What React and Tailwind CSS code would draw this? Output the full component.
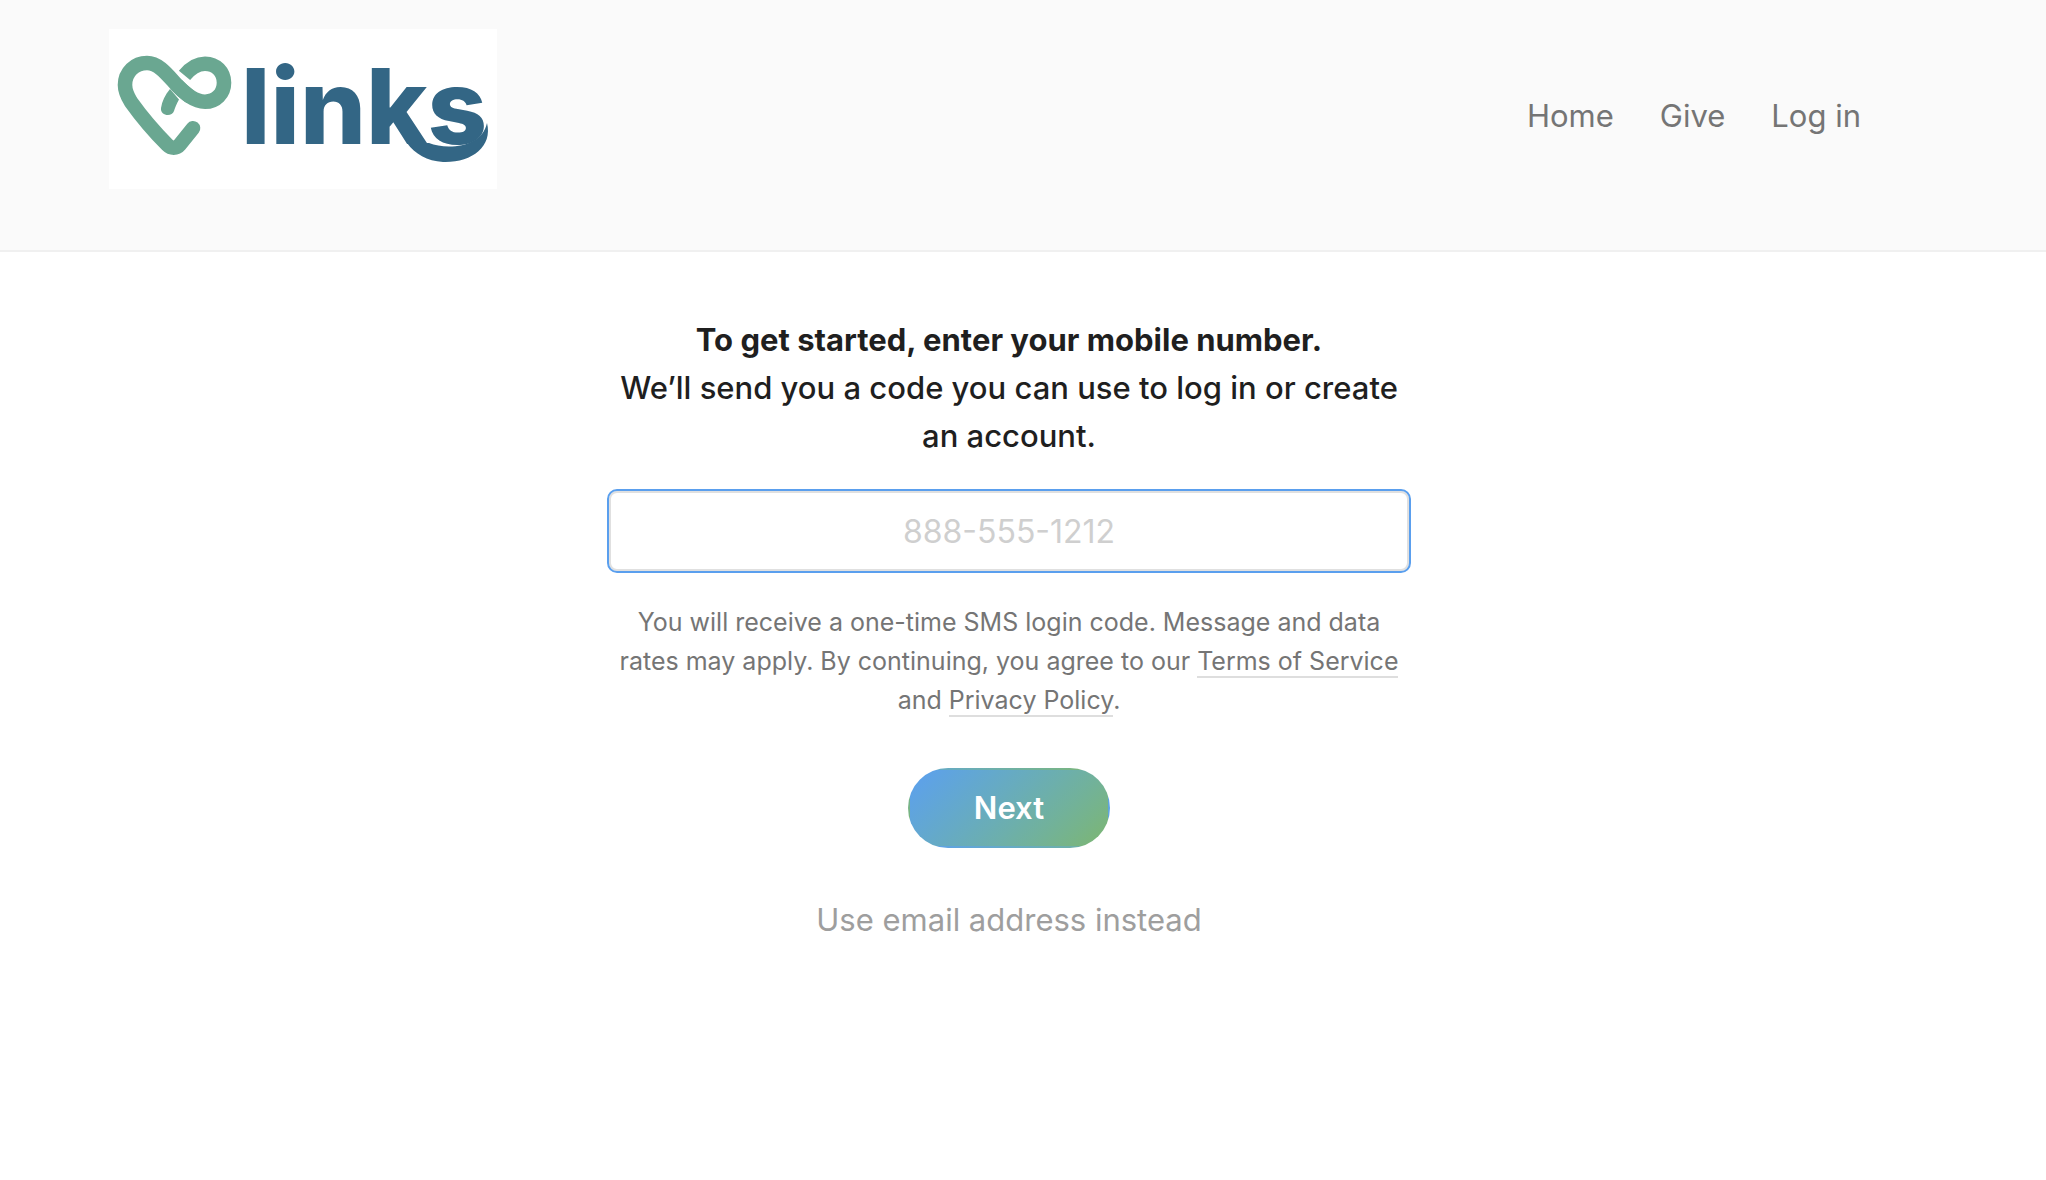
const navItems = ['Home', 'Give', 'Log in'];

function Logo() {
  return (
    <svg viewBox="0 0 388 160" className="block h-40 w-[388px] bg-white" role="img" aria-label="Links">
      <g fill="none" stroke="#6aa791" strokeWidth="14.6">
        <path d="M75.5 46.3C82 38.5 88 34.7 96 34.7C107 34.7 115 43 115 53.7C115 64.5 107 72.7 96 72.7C85 72.7 76 64.5 67.7 56" />
        <path
          d="M84 99.2L70.5 116C67.5 119.6 62 119.6 58.5 116C44 101.5 32 87 22 73C18 66.5 16 62 16 56C16 43 26 34 38 34C50 34 59 46.5 67.7 56C72 60.5 76 64 80 67"
          strokeLinecap="round"
          strokeLinejoin="round"
        />
      </g>
      <path d="M61 60L70 70.5C67.5 75 66 79 65 82C63 88.5 51 87 52 79C53 72 56 66 61 60Z" fill="#6aa791" />
      <text x="132" y="115" fill="#336685" className="font-['Inter',sans-serif] text-[104px] font-extrabold">
        links
      </text>
      <path
        d="M298 114L320 114C332 119 352 119 364 112C372 108 376 102 378 94C384 118 362 134 334 133C318 132 306 125 298 114Z"
        fill="#336685"
      />
    </svg>
  );
}

export default function App() {
  return (
    <div className="min-h-screen bg-white font-['Inter',sans-serif] text-[31px] leading-[48px] text-[#1f1f1f]">
      <header className="border-b-2 border-[#f0f0f0] bg-[#fafafa] pt-[29px] pr-7 pb-[61px]">
        <div className="mx-auto flex max-w-[1800px] items-start justify-between">
          <a href="#home">
            <Logo />
          </a>
          <nav className="flex gap-[46px] pt-[63px] pr-12 text-[#757575]">
            {navItems.map((item) => (
              <a key={item} href="#">
                {item}
              </a>
            ))}
          </nav>
        </div>
      </header>

      <main className="pt-16 pr-7">
        <form className="mx-auto flex max-w-[804px] flex-col items-center text-center">
          <label htmlFor="mobile" className="font-medium">
            <strong className="block font-bold">To get started, enter your mobile number.</strong>
            We’ll send you a code you can use to log in or create an account.
          </label>
          <input
            id="mobile"
            type="tel"
            placeholder="888-555-1212"
            className="mt-[29px] h-[84px] w-full rounded-[10px] border-2 border-[#5a9fee] text-center text-[32px] shadow-[inset_0_0_0_2px_#e0e0e0] outline-none placeholder:text-[#cfcfcf]"
          />
          <p className="mt-[30px] text-[25px] leading-[39px] text-[#757575]">
            You will receive a one-time SMS login code. Message and data rates may apply. By continuing, you agree to our{' '}
            <a href="#terms" className="border-b-2 border-[#dedede]">Terms of Service</a> and{' '}
            <a href="#privacy" className="border-b-2 border-[#dedede]">Privacy Policy</a>.
          </p>
          <button
            type="submit"
            className="mt-12 h-20 rounded-full border-2 border-transparent bg-linear-135 from-[#5c9ff0] to-[#7db670] px-16 font-semibold text-white"
          >
            Next
          </button>
          <button type="button" className="mt-12 text-[#9e9e9e]">
            Use email address instead
          </button>
        </form>
      </main>
    </div>
  );
}
